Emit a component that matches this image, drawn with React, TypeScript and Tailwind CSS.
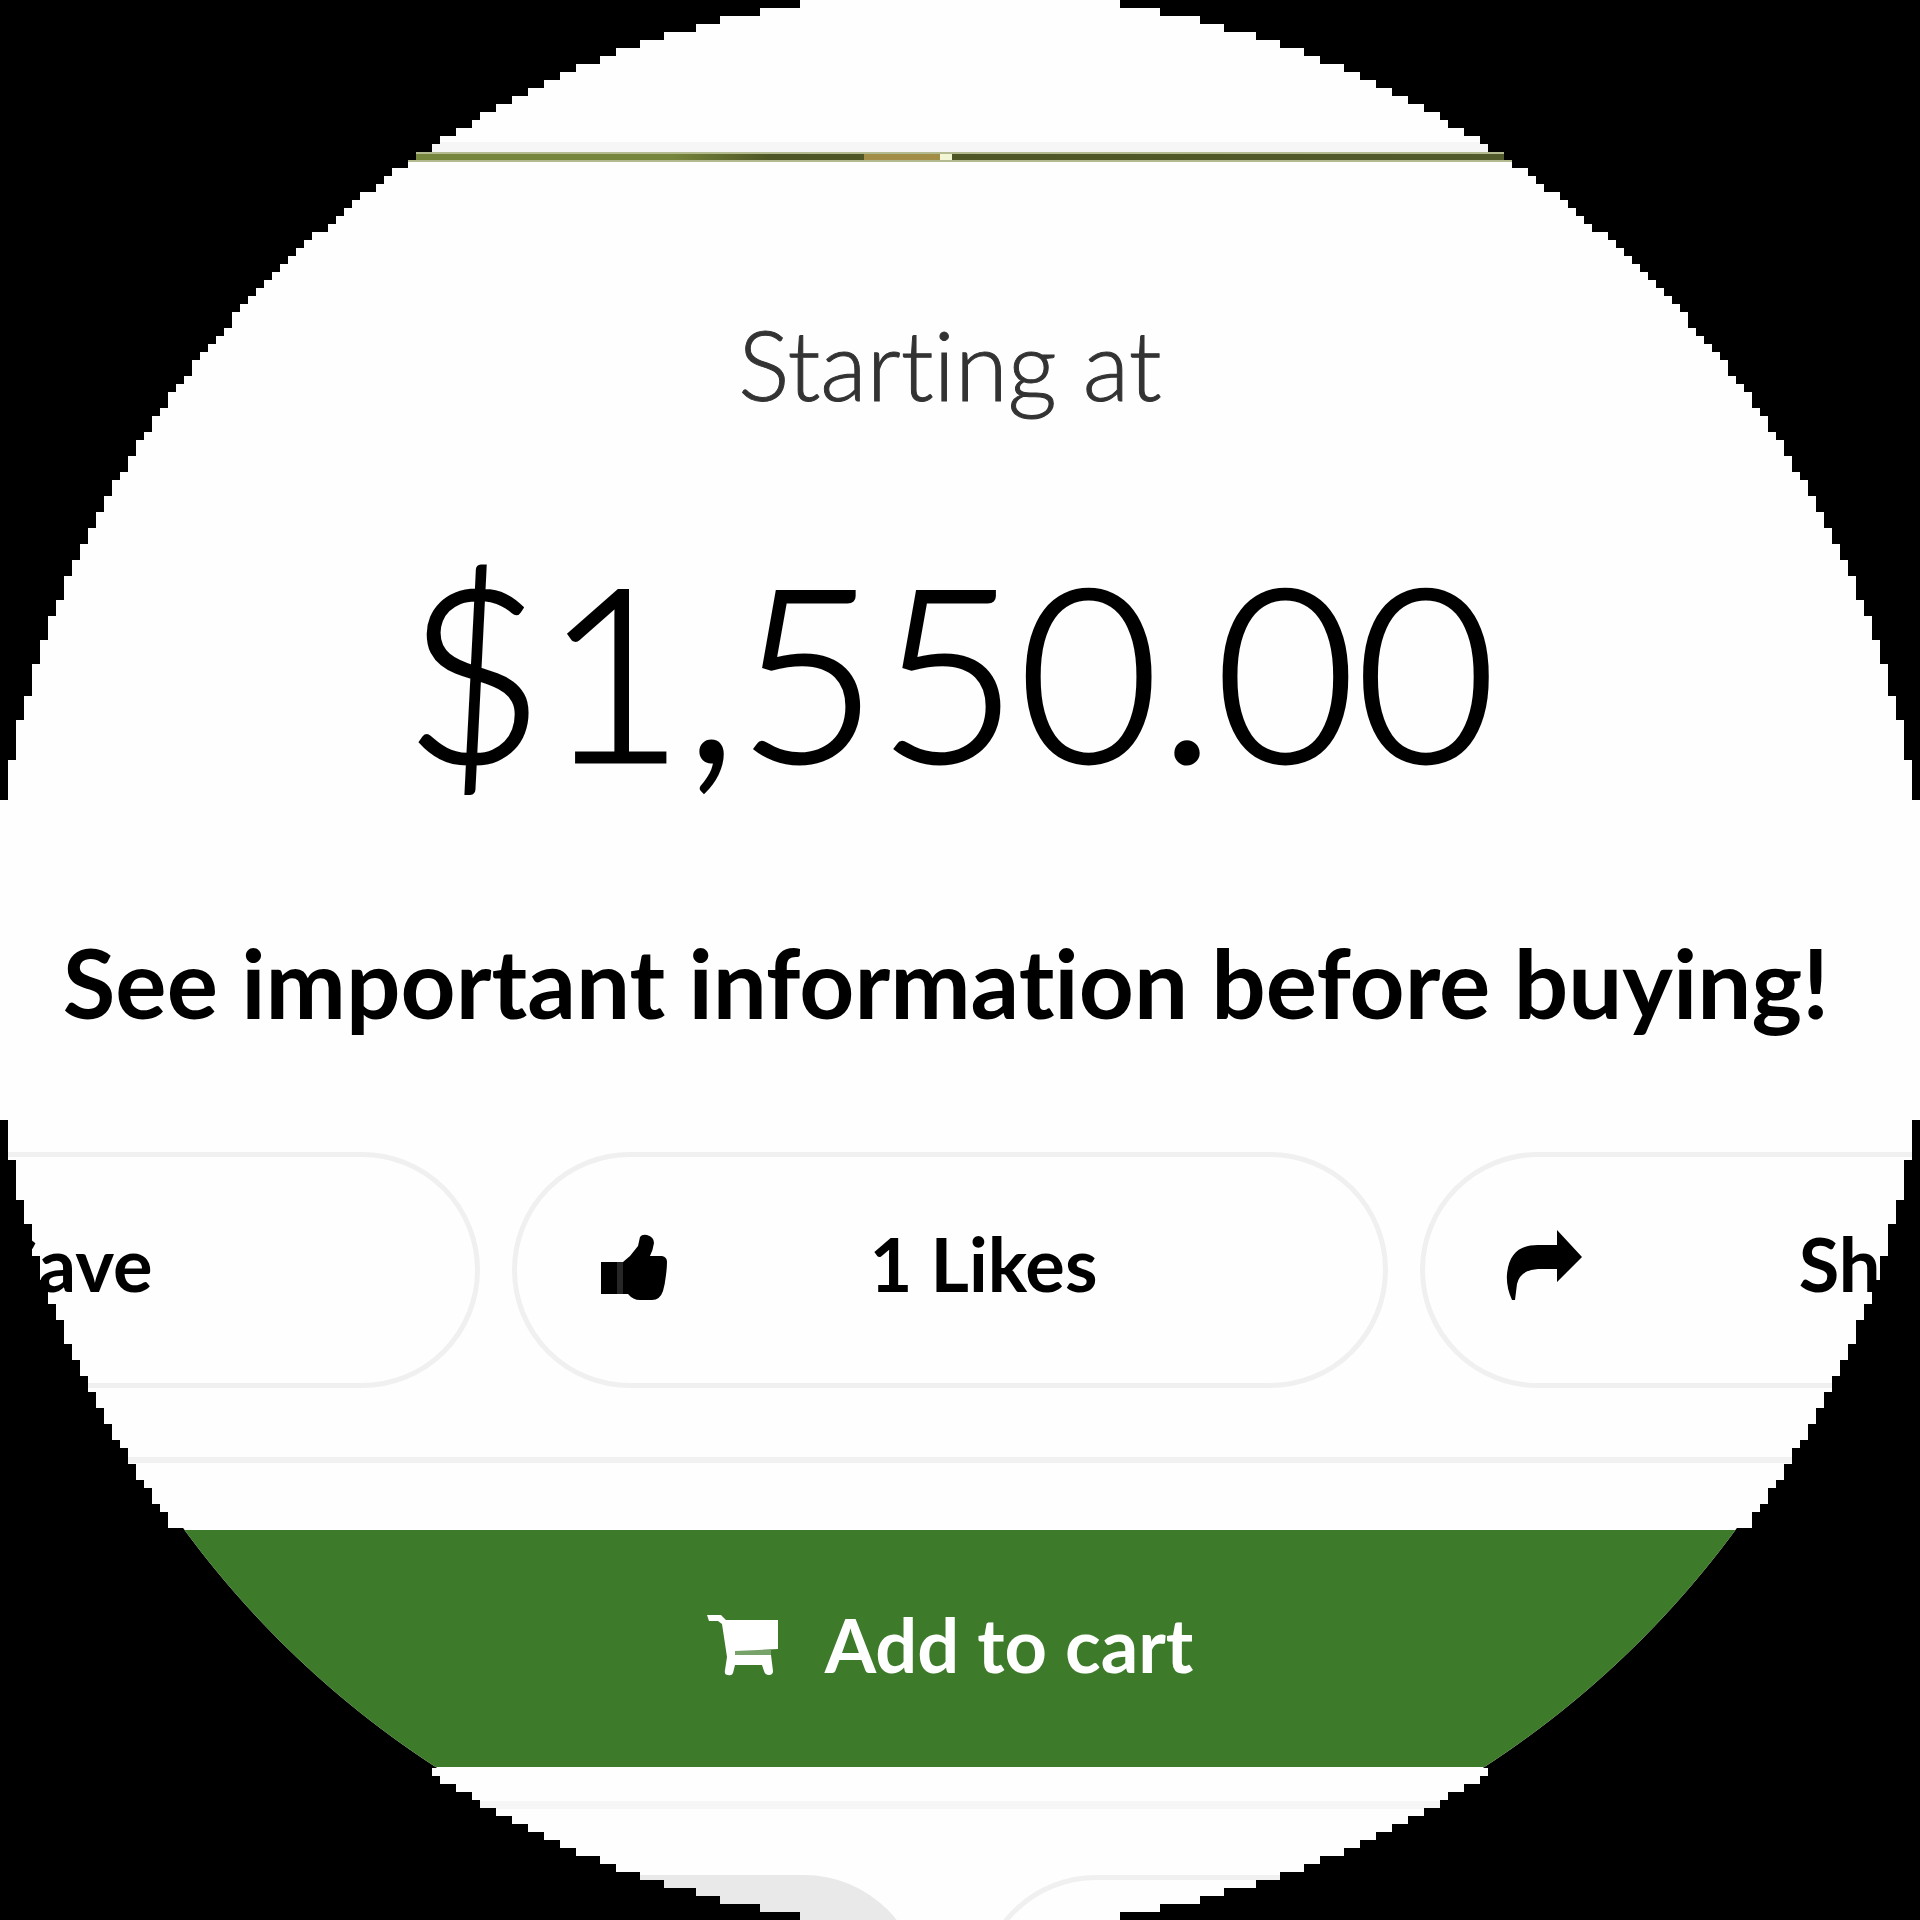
import type { ReactNode } from "react";

const CELLS = 240;
const RADIUS = 121.2;
const SMOOTH_RADIUS = 120.3;

function steppedCircle() {
  const half = CELLS / 2;
  const right: string[] = [];
  const left: string[] = [];
  const pct = (n: number) => `${((n / CELLS) * 100).toFixed(3)}%`;
  for (let row = 0; row < CELLS; row++) {
    const smooth = row >= 191 && row < 221;
    const r = smooth ? SMOOTH_RADIUS : RADIUS;
    const at = (y: number) => Math.sqrt(Math.max(0, r * r - (y - half) * (y - half)));
    const top = Math.min(half, smooth ? at(row) : Math.round(at(row + 0.5)));
    const bottom = Math.min(half, smooth ? at(row + 1) : Math.round(at(row + 0.5)));
    right.push(`${pct(half + top)} ${pct(row)}`, `${pct(half + bottom)} ${pct(row + 1)}`);
    left.push(`${pct(half - top)} ${pct(row)}`, `${pct(half - bottom)} ${pct(row + 1)}`);
  }
  // The left side is walked bottom to top, so each row's two points swap order.
  return `polygon(${[...right, ...left.reverse()].join(",")})`;
}

const circle = steppedCircle();

function ThumbIcon() {
  return (
    <svg viewBox="0 0 84 80" className="h-20 w-21 shrink-0" fill="currentColor" aria-hidden="true">
      <path d="M9 38H25V70H9Z" />
      <path d="M25 38H31V70H25Z" opacity="0.85" />
      <path d="M31 38L38 32L46 22L48 13Q50 10 55 11Q62 13 62 19Q61 26 58 32H70Q75 33 75 38Q75 43 74 51Q73 60 71 67Q68 76 60 76H48Q41 76 36 70H31Z" />
    </svg>
  );
}

function ShareIcon() {
  return (
    <svg viewBox="0 0 84 80" className="h-20 w-21 shrink-0" fill="currentColor" aria-hidden="true">
      <path d="M57 6L82 33L57 58V45H38Q20 46 17 60L15 76H12Q6 63 7 50C9 30 19 21 38 21H57Z" />
    </svg>
  );
}

function CartIcon() {
  return (
    <svg viewBox="0 0 76 64" className="h-16 w-19 shrink-0" fill="currentColor" aria-hidden="true">
      <path d="M0 2H14L19 7H71V36L28 38V42H64L66 58Q66 62 62 62Q58 62 57 58L55 52H28L26 60Q25 63 21 62Q17 62 18 57L20 44L15 11L11 8H2Z" />
      <path d="M27 37H64V43H27Z" opacity="0.3" />
    </svg>
  );
}

function Pill({ icon, label }: { icon: ReactNode; label: string }) {
  return (
    <button className="flex h-[236px] w-[876px] shrink-0 items-center rounded-full border-5 border-[#f0f0f0] pr-[92px] pb-3 pl-[75px] text-[74px] font-bold">
      {icon}
      <span className="flex-1 text-center">{label}</span>
    </button>
  );
}

export default function App() {
  return (
    <div className="min-h-screen overflow-hidden bg-black">
      <main
        className="flex aspect-square w-full flex-col overflow-hidden bg-[#fefefe] font-['Lato',sans-serif] leading-none text-black [font-variant-ligatures:none]"
        style={{ clipPath: circle }}
      >
        <div className="mt-[142px] h-2.5 shrink-0 bg-[#f6f6f6]" />
        <div className="h-2.5 shrink-0 border-y-2 border-[#b4ba90] bg-linear-to-r from-[#76853c] from-35% via-[#4e5524] via-40% to-[#525c2e]">
          <div className="flex h-full w-1/2 justify-end pr-2">
            <div className="h-full w-[76px] bg-[#a18d45]" />
            <div className="h-full w-3 bg-[#f2f6d5]" />
          </div>
        </div>
        <section className="flex shrink-0 flex-col items-center pt-[142px] pr-5">
          <p className="h-[120px] text-[96px] leading-[120px] font-light text-[#333] [-webkit-text-stroke:1px_#333]">
            Starting at
          </p>
          <p className="mt-[95px] h-[300px] text-[242px] leading-[300px] font-light [-webkit-text-stroke:3px_black]">
            $1,550.00
          </p>
          <p className="mt-[103px] h-[120px] pr-2 text-[96px] leading-[120px] font-bold whitespace-nowrap">
            See important information before buying!
          </p>
          <div className="mt-[110px] flex gap-8">
            <Pill icon={<div className="w-21" />} label="Save" />
            <Pill icon={<ThumbIcon />} label="1 Likes" />
            <Pill icon={<ShareIcon />} label="Share" />
          </div>
        </section>
        <hr className="mt-[69px] shrink-0 border-t-6 border-[#f1f1f1]" />
        <button className="mt-[67px] flex h-[237px] shrink-0 items-center justify-center gap-[42px] bg-[#3d7a2a] pr-5 pb-2 text-[74px] font-bold text-white">
          <CartIcon />
          Add to cart
        </button>
        <hr className="mt-[34px] shrink-0 border-t-8 border-[#f6f6f6]" />
        <div className="mt-[66px] flex shrink-0 justify-center gap-[56px] pr-5">
          <div className="h-[236px] w-[876px] shrink-0 rounded-full bg-[#e9e9e9]" />
          <div className="h-[236px] w-[876px] shrink-0 rounded-full border-5 border-[#f0f0f0]" />
        </div>
      </main>
    </div>
  );
}
